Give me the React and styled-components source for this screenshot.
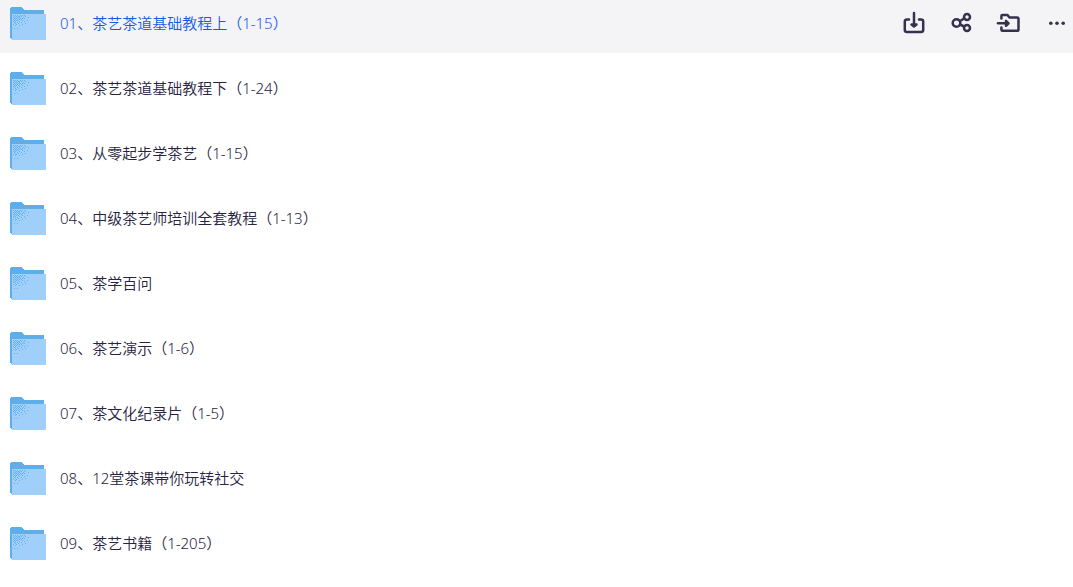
import React, { useState } from 'react';
import styled, { createGlobalStyle } from 'styled-components';

const GlobalStyle = createGlobalStyle`
  body {
    margin: 0;
    background: #fff;
    font-family: "Noto Sans", "Noto Sans CJK SC", sans-serif;
  }
`;

const List = styled.ul`
  display: flex;
  flex-direction: column;
  gap: 12px;
  margin: 0;
  padding: 0;
  list-style: none;
`;

const Row = styled.li`
  display: flex;
  align-items: center;
  gap: 14px;
  padding: 7px 1px 13px 10px;
  background: ${props => (props.$active ? '#f4f4f7' : 'transparent')};
`;

const FolderSvg = styled.svg`
  display: block;
  flex: none;
  width: 36px;
  height: 33px;
`;

const FileName = styled.a`
  flex: 1;
  padding-bottom: 2px;
  font-size: 15px;
  font-weight: 350;
  line-height: 24px;
  text-decoration: none;
  color: ${props => (props.$active ? '#175ae4' : '#272340')};
`;

const Actions = styled.div`
  display: flex;
  gap: 20px;
`;

const ActionButton = styled.button`
  width: 28px;
  height: 29px;
  padding: 0;
  border: none;
  background: none;
  color: #37304f;
  cursor: pointer;

  svg {
    display: block;
    width: 28px;
    height: 29px;
    fill: none;
    stroke: currentColor;
    stroke-width: 2.5;
    stroke-linecap: round;
    stroke-linejoin: round;
  }
`;

// speckles in the folder corner, [x, y]
const DOTS = [
  [3, 8], [5, 8], [7, 8], [10, 8], [12, 8], [14, 8],
  [4, 9], [6, 9], [8, 9], [9, 9], [11, 9], [15, 9],
  [3, 10], [5, 10], [7, 10], [9, 10], [13, 10], [18, 10],
  [4, 11], [6, 11], [8, 11], [10, 11], [12, 11], [14, 11],
  [3, 12], [5, 12], [7, 12], [9, 12], [11, 12],
  [4, 13], [6, 13], [8, 13], [12, 13], [17, 13],
  [3, 14], [5, 14], [9, 14], [14, 14],
  [4, 15], [7, 15], [11, 15],
  [5, 16], [8, 16], [15, 16],
  [3, 17], [6, 17], [12, 17],
  [5, 18], [9, 18],
  [4, 21], [7, 21],
];

const FolderIcon = () => (
  <FolderSvg viewBox="0 0 36 33" shapeRendering="crispEdges" aria-hidden="true">
    <path d="M1 0H12L14 3H33L34 4V32H1L0 31V1Z" fill="#5eaeea" />
    <path d="M2 7H35L36 8V32L35 33H2Z" fill="#a0d0f9" />
    {DOTS.map(([x, y]) => (
      <rect key={`${x}-${y}`} x={x} y={y} width="1" height="1" fill="#66b1ec" />
    ))}
  </FolderSvg>
);

const DownloadIcon = () => (
  <svg viewBox="0 0 28 29">
    <path d="M9 10.5H7Q4.8 10.5 4.8 12.5V21Q4.8 23 7 23H21Q23.2 23 23.2 21V12.5Q23.2 10.5 21 10.5H19" />
    <path d="M14 4V15" />
    <path d="M11.5 15.5H16.5L14 17.5Z" fill="currentColor" />
  </svg>
);

const ShareIcon = () => (
  <svg viewBox="0 0 28 29">
    <circle cx="8.5" cy="14" r="3.8" />
    <circle cx="19" cy="8" r="3" />
    <circle cx="19" cy="19" r="3" />
    <path d="M12 12L16.2 9.5M12 15.5L16.2 17.5" />
  </svg>
);

const MoveIcon = () => (
  <svg viewBox="0 0 28 29">
    <path d="M5.4 9.5V7Q5.4 6 6.4 6H11.5L13.5 8.5H21Q22.5 8.5 22.5 10V20.5Q22.5 21.8 21 21.8H6.5Q5.4 21.8 5.4 20.5V18.5" />
    <path d="M2 14.3H10" />
    <path d="M10 11.8V16.8L12.5 14.3Z" fill="currentColor" />
  </svg>
);

const MoreIcon = () => (
  <svg viewBox="0 0 28 29">
    {[6.8, 13, 19.2].map(cx => (
      <circle key={cx} cx={cx} cy="14.3" r="1.8" fill="currentColor" stroke="none" />
    ))}
  </svg>
);

const actions = [
  { label: '下载', Icon: DownloadIcon },
  { label: '分享', Icon: ShareIcon },
  { label: '移动', Icon: MoveIcon },
  { label: '更多', Icon: MoreIcon },
];

const folders = [
  '01、茶艺茶道基础教程上（1-15）',
  '02、茶艺茶道基础教程下（1-24）',
  '03、从零起步学茶艺（1-15）',
  '04、中级茶艺师培训全套教程（1-13）',
  '05、茶学百问',
  '06、茶艺演示（1-6）',
  '07、茶文化纪录片（1-5）',
  '08、12堂茶课带你玩转社交',
  '09、茶艺书籍（1-205）',
];

const App = () => {
  const [active, setActive] = useState(0);

  return (
    <>
      <GlobalStyle />
      <List>
        {folders.map((name, index) => (
          <Row
            key={name}
            $active={index === active}
            onMouseEnter={() => setActive(index)}
          >
            <FolderIcon />
            <FileName href="#" lang="zh-CN" $active={index === active}>{name}</FileName>
            {index === active && (
              <Actions>
                {actions.map(({ label, Icon }) => (
                  <ActionButton key={label} type="button" aria-label={label}>
                    <Icon />
                  </ActionButton>
                ))}
              </Actions>
            )}
          </Row>
        ))}
      </List>
    </>
  );
};

export default App;
